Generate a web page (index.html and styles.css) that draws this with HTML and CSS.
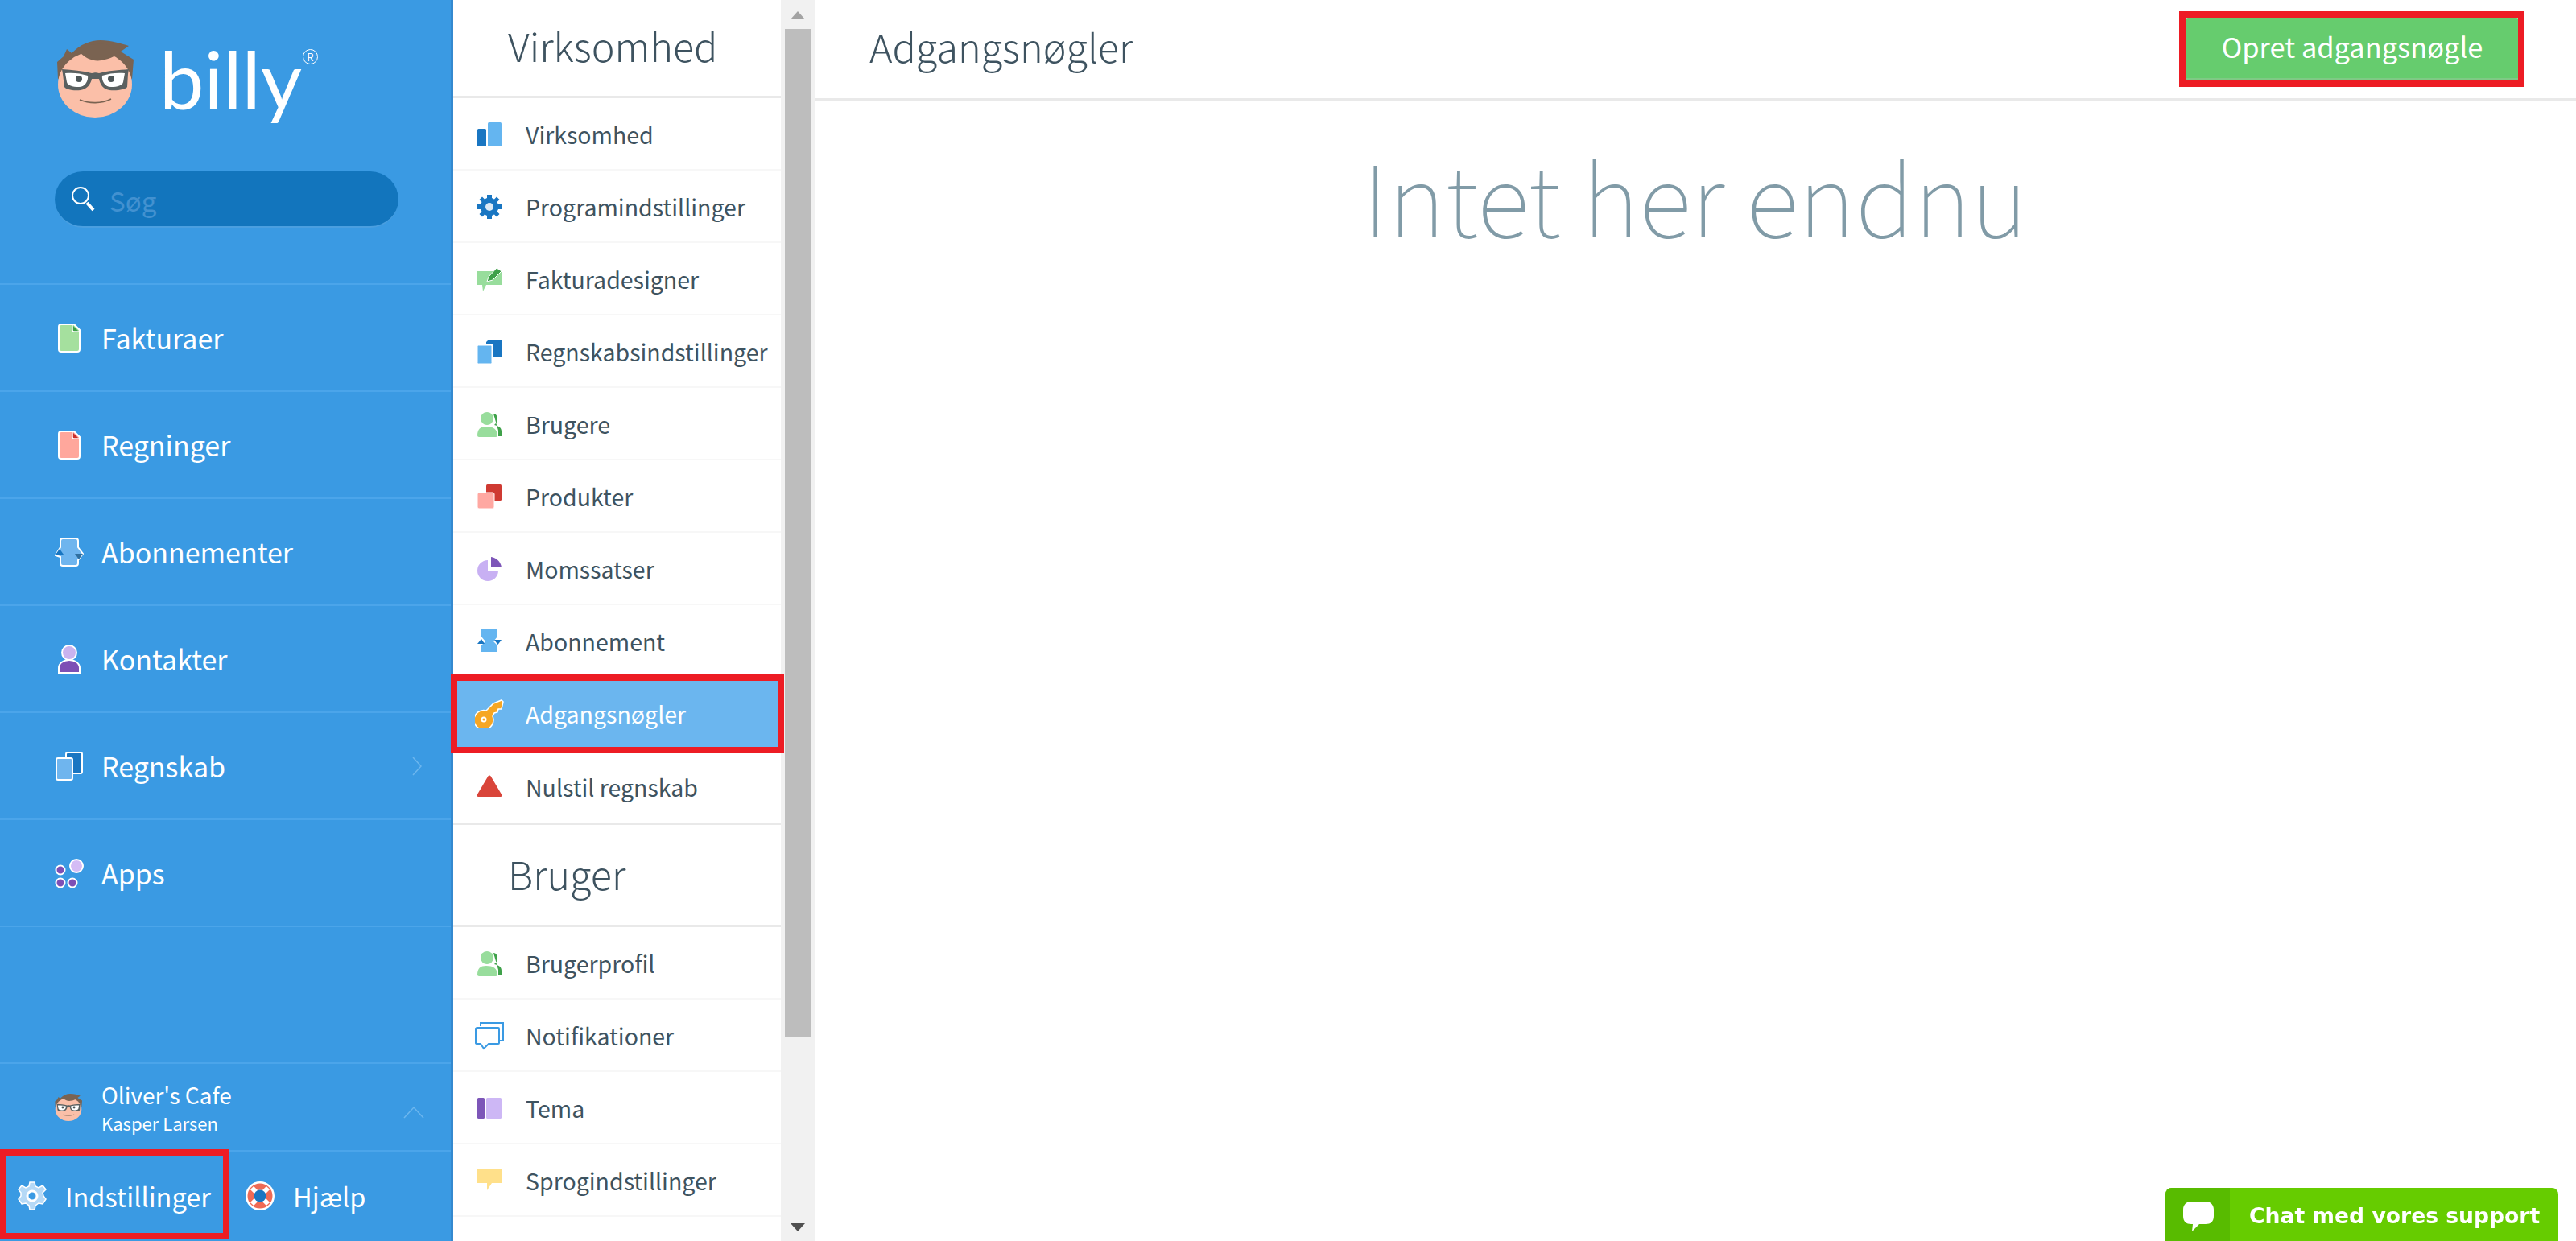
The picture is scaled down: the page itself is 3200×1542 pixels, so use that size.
FILE: index.html
```html
<!DOCTYPE html>
<html lang="da">
<head>
  <meta charset="UTF-8">
  <title>Adgangsnøgler</title>
  <link rel="stylesheet" href="styles.css">
</head>
<body>
  <svg class="sprites" width="0" height="0">
    <symbol id="billy-face" viewBox="0 0 96 100">
      <path d="M1 29 9 22 13 13 19 18C30 7 42 2 55 2 68 2 80 6 90 9L80 16 96 26 94 50 2 50Z" fill="#7a6351"/>
      <ellipse cx="48" cy="57" rx="46" ry="41" fill="#fbbfa8"/>
      <path d="M30 18C36 24 46 29 56 27 68 25 76 20 80 16L60 6 40 8Z" fill="#7a6351"/>
      <path d="M7 38C20 39 32 40 44 43 48 42 50 42 53 43 64 40 78 39 90 38L89 44 88 60C86 63 76 65 66 64 58 63 54 56 53 50H44C43 56 38 63 30 64 20 65 12 63 10 60L8 44Z" fill="#5a6060"/>
      <path d="M11 43C20 42 30 43 39 46 40 52 36 60 28 60 20 60 14 58 13 54Z M57 46C66 43 76 42 85 43L83 54C82 58 76 60 68 60 60 60 56 52 57 46Z" fill="#fff"/>
      <circle cx="28" cy="50" r="4" fill="#4d5658"/>
      <circle cx="68" cy="50" r="4" fill="#4d5658"/>
      <path d="M29 76C41 81 56 81 68 75" fill="none" stroke="#7a6351" stroke-width="1.6"/>
    </symbol>
    <symbol id="people" viewBox="0 0 30 32">
      <path d="M20 3C24 3 25 7 25 10 25 13 23 15 21 17 26 18 30 20 30 25V31H26V24Z" fill="#3fa14a"/>
      <circle cx="12" cy="9" r="8" fill="#98dd9c"/>
      <path d="M0 30C0 22 4 19 11 19 19 19 25 22 25 30 25 31 24 32 23 32H2C1 32 0 31 0 30Z" fill="#98dd9c"/>
    </symbol>
  </svg>

  <aside class="sidebar">
    <div class="brand">
      <svg class="brand-face"><use href="#billy-face"/></svg>
      <span class="brand-name">billy</span><span class="brand-reg">R</span>
    </div>
    <div class="search">
      <svg class="search-icon" viewBox="0 0 30 32">
        <circle cx="12" cy="12" r="10" fill="none" stroke="#fff" stroke-width="2"/>
        <path d="M20 21 28 30" stroke="#fff" stroke-width="4"/>
      </svg>
      <input class="search-input" type="text" placeholder="Søg">
    </div>
    <nav class="main-nav">
      <a class="main-item">
        <span class="main-icon"><svg width="28" height="36" viewBox="0 0 28 36"><path d="M4 1H20L27 8V32C27 34 26 35 24 35H4C2 35 1 34 1 32V4C1 2 2 1 4 1Z" fill="#a5e09e" stroke="#fff" stroke-width="2"/><path d="M18 2 26 10H18Z" fill="#3fa14a"/><path d="M18 2V8C18 9 19 10 20 10H26" fill="none" stroke="#fff" stroke-width="1.5"/></svg></span>
        Fakturaer
      </a>
      <a class="main-item">
        <span class="main-icon"><svg width="28" height="36" viewBox="0 0 28 36"><path d="M4 1H20L27 8V32C27 34 26 35 24 35H4C2 35 1 34 1 32V4C1 2 2 1 4 1Z" fill="#ffa79c" stroke="#fff" stroke-width="2"/><path d="M18 2 26 10H18Z" fill="#c9302c"/><path d="M18 2V8C18 9 19 10 20 10H26" fill="none" stroke="#fff" stroke-width="1.5"/></svg></span>
        Regninger
      </a>
      <a class="main-item">
        <span class="main-icon"><svg width="36" height="36" viewBox="0 0 36 36"><path d="M10 1H26C28 1 29 2 29 4V12L35 20 29 28V32C29 34 28 35 26 35H10C8 35 7 34 7 32V24L1 22 7 12V4C7 2 8 1 10 1Z" fill="#6fb5ee" stroke="#fff" stroke-width="2"/><path d="M6 14 11 21H1Z" fill="#1976c2"/><path d="M25 20H35L30 27Z" fill="#2f6f9f"/></svg></span>
        Abonnementer
      </a>
      <a class="main-item">
        <span class="main-icon"><svg width="30" height="38" viewBox="0 0 30 38"><circle cx="15" cy="11" r="9" fill="#c9b3ef" stroke="#fff" stroke-width="2"/><path d="M2 36V30C2 24 8 20 15 20 22 20 28 24 28 30V36Z" fill="#7d4fb5" stroke="#fff" stroke-width="2"/></svg></span>
        Kontakter
      </a>
      <a class="main-item">
        <span class="main-icon"><svg width="34" height="36" viewBox="0 0 34 36"><rect x="13" y="1" width="20" height="26" rx="2" fill="#1976c2" stroke="#fff" stroke-width="2"/><rect x="1" y="8" width="20" height="27" rx="2" fill="#6fb5ee" stroke="#fff" stroke-width="2"/></svg></span>
        Regnskab
        <svg class="main-arrow" width="12" height="24" viewBox="0 0 12 24"><path d="M1 1 11 12 1 23" fill="none" stroke="#6cb6ee" stroke-width="1.5"/></svg>
      </a>
      <a class="main-item">
        <span class="main-icon"><svg width="36" height="38" viewBox="0 0 36 38"><circle cx="27" cy="10" r="8" fill="#d4bcf5" stroke="#fff" stroke-width="2"/><circle cx="7" cy="15" r="5.5" fill="#7d4fb5" stroke="#fff" stroke-width="2"/><circle cx="7" cy="31" r="5.5" fill="#7d4fb5" stroke="#fff" stroke-width="2"/><circle cx="22" cy="31" r="5.5" fill="#7d4fb5" stroke="#fff" stroke-width="2"/></svg></span>
        Apps
      </a>
    </nav>
    <div class="user-box">
      <svg class="user-face"><use href="#billy-face"/></svg>
      <div class="user-text">
        <div class="user-org">Oliver's Cafe</div>
        <div class="user-name">Kasper Larsen</div>
      </div>
      <svg class="user-chevron" width="26" height="16" viewBox="0 0 26 16"><path d="M1 15 13 2 25 15" fill="none" stroke="#6cb6ee" stroke-width="1.5"/></svg>
    </div>
    <div class="bottom-bar">
      <a class="bottom-item marked-side">
        <svg width="36" height="36" viewBox="0 0 36 36">
          <g fill="#b5d9f6" stroke="#fff" stroke-width="1.5">
            <path d="M15 1H21L22 6 26 8 31 5 35 10 31 14 32 18 35 22 31 28 26 27 22 30 21 35H15L14 30 10 27 5 28 1 22 4 18 4 14 1 10 5 5 10 8 14 6Z"/>
          </g>
          <circle cx="18" cy="18" r="6" fill="#3a9ae3" stroke="#fff" stroke-width="3"/>
        </svg>
        Indstillinger
      </a>
      <a class="bottom-item help-item">
        <svg width="36" height="36" viewBox="0 0 36 36">
          <circle cx="18" cy="18" r="18" fill="#fff"/>
          <circle cx="18" cy="18" r="11.5" fill="none" stroke="#ef6a55" stroke-width="8"/>
          <path d="M8 8 13 13M28 8 23 13M8 28 13 23M28 28 23 23" stroke="#fff" stroke-width="6"/>
          <circle cx="18" cy="18" r="7.5" fill="#1976c2"/>
        </svg>
        Hjælp
      </a>
    </div>
  </aside>

  <div class="settings">
    <div class="settings-list">
      <h2 class="settings-head">Virksomhed</h2>
      <a class="settings-item">
        <svg class="settings-icon" viewBox="0 0 30 30"><rect y="8" width="11" height="22" rx="1.5" fill="#1976c2"/><rect x="13" width="17" height="30" rx="1.5" fill="#64b5f0"/></svg>
        Virksomhed
      </a>
      <a class="settings-item">
        <svg class="settings-icon" viewBox="0 0 30 30"><path d="M12 0H18V4L21 5.500 24 2.500 27.500 6 24.500 9 26 12H30V18H26L24.500 21 27.500 24 24 27.500 21 24.500 18 26V30H12V26L9 24.500 6 27.500 2.500 24 5.500 21 4 18H0V12H4L5.500 9 2.500 6 6 2.500 9 5.500 12 4Z" fill="#1976c2"/><circle cx="15" cy="15" r="5" fill="#dbe9f5"/></svg>
        Programindstillinger
      </a>
      <a class="settings-item">
        <svg class="settings-icon" viewBox="0 0 30 30"><path d="M0 5H30V22H11L7 30 6 22H0Z" fill="#98dd9c"/><path d="M12 18 14 12 24 1 30 5 19 16Z" fill="#3fa14a" stroke="#fff" stroke-width="1"/></svg>
        Fakturadesigner
      </a>
      <a class="settings-item">
        <svg class="settings-icon" viewBox="0 0 30 30"><path d="M11 3 14 0H30V22H19V6H11Z" fill="#1976c2"/><rect y="7" width="18" height="23" rx="1.500" fill="#64b5f0" stroke="#fff" stroke-width="1"/></svg>
        Regnskabsindstillinger
      </a>
      <a class="settings-item">
        <svg class="settings-icon"><use href="#people"/></svg>
        Brugere
      </a>
      <a class="settings-item">
        <svg class="settings-icon" viewBox="0 0 30 30"><rect x="11" width="19" height="20" rx="1.500" fill="#cf3a32"/><rect y="10" width="21" height="20" rx="2" fill="#ffa8a2" stroke="#fff" stroke-width="1"/></svg>
        Produkter
      </a>
      <a class="settings-item">
        <svg class="settings-icon" viewBox="0 0 30 30"><path d="M13 4A13 13 0 1 0 26 17H13Z" fill="#c8b0f3"/><path d="M17 0C24 1 29 6 30 13H17Z" fill="#7d56b8"/></svg>
        Momssatser
      </a>
      <a class="settings-item">
        <svg class="settings-icon" viewBox="0 0 30 30"><path d="M5 0H25V9L20 15 25 20V28H5V20L10 15 5 9Z" fill="#64b5f0"/><path d="M5 12 9 18H0Z" fill="#1976c2"/><path d="M21 13H30L25.500 19Z" fill="#1976c2"/></svg>
        Abonnement
      </a>
      <a class="settings-item settings-item-active">
        <svg class="settings-icon settings-icon-key" viewBox="0 0 36 36"><path d="M23 5 33 1 35 3 33 12 29 12 28 16 24 17 22 21A12 12 0 1 1 14 14Z" fill="#f6a623" stroke="#fff" stroke-width="1.500"/><circle cx="11" cy="25" r="3.500" fill="#fff"/><circle cx="11" cy="25" r="1.500" fill="#f6a623"/></svg>
        Adgangsnøgler
      </a>
      <a class="settings-item settings-item-last">
        <svg class="settings-icon" viewBox="0 0 30 30"><path d="M13 2C14 0 16 0 17 2L30 24C31 26 30 27 28 27H2C0 27-1 26 0 24Z" fill="#d9453a"/></svg>
        Nulstil regnskab
      </a>
      <h2 class="settings-head settings-head-second">Bruger</h2>
      <a class="settings-item">
        <svg class="settings-icon"><use href="#people"/></svg>
        Brugerprofil
      </a>
      <a class="settings-item">
        <svg class="settings-icon settings-icon-notif" viewBox="0 0 36 36"><path d="M7 6V2H35V24H30" fill="none" stroke="#3a9ae3" stroke-width="2"/><path d="M3 8H29C30 8 30 9 30 9V27C30 28 30 28 29 28H17L11 34 7 28H3C2 28 1 28 1 27V9C1 9 2 8 3 8Z" fill="#fff" stroke="#3a9ae3" stroke-width="2"/></svg>
        Notifikationer
      </a>
      <a class="settings-item">
        <svg class="settings-icon" viewBox="0 0 30 30"><rect y="2" width="9" height="26" rx="1.500" fill="#7d56b8"/><rect x="11" y="2" width="19" height="26" rx="1.500" fill="#cdb7f5"/></svg>
        Tema
      </a>
      <a class="settings-item">
        <svg class="settings-icon" viewBox="0 0 30 30"><path d="M0 1H30V18H18L12 27V18H0Z" fill="#ffe08a"/></svg>
        Sprogindstillinger
      </a>
      <a class="settings-item">
        <svg class="settings-icon" viewBox="0 0 30 30"><circle cx="15" cy="10" r="8" fill="#4d5f6b"/></svg>
      </a>
    </div>
    <div class="scrollbar">
      <span class="scroll-arrow scroll-arrow-up"></span>
      <div class="scroll-track"><div class="scroll-thumb"></div></div>
      <span class="scroll-arrow scroll-arrow-down"></span>
    </div>
  </div>

  <main class="content">
    <header class="content-bar">
      <h1 class="content-title">Adgangsnøgler</h1>
      <button class="create-btn" type="button">Opret adgangsnøgle</button>
    </header>
    <p class="empty-text">Intet her endnu</p>
  </main>

  <div class="chat-tab">
    <span class="chat-icon">
      <svg width="38" height="40" viewBox="0 0 38 40"><path d="M10 0H28C34 0 38 4 38 10V18C38 25 34 28 28 28H20L11 37 12 28H10C4 28 0 25 0 18V10C0 4 4 0 10 0Z" fill="#fff"/></svg>
    </span>
    <span class="chat-label">Chat med vores support</span>
  </div>
</body>
</html>
```

FILE: styles.css
```css
* {
    box-sizing: border-box;
}
body {
    margin: 0;
    height: 100vh;
    display: flex;
    overflow: hidden;
    background-color: #fff;
    font-family: "Noto Sans CJK SC", "Open Sans", sans-serif;
    color: #3e5360;
}
.sprites {
    position: absolute;
}

/* left blue column */
.sidebar {
    width: 563px;
    flex-shrink: 0;
    display: flex;
    flex-direction: column;
    background-color: #3a9ae3;
    border-right: 3px solid #3489cf;
    color: #fff;
}
.brand {
    height: 213px;
    padding: 48px 0 0 70px;
    display: flex;
    align-items: flex-start;
}
.brand-face {
    width: 96px;
    height: 100px;
}
.brand-name {
    margin: -6px 0 0 32px;
    font-family: "Lato", sans-serif;
    font-size: 99px;
    line-height: 112px;
    font-weight: 400;
}
.brand-reg {
    width: 19px;
    height: 19px;
    margin: 13px 0 0 1px;
    border: 1px solid #fff;
    border-radius: 50%;
    font-size: 13px;
    line-height: 17px;
    text-align: center;
}
.search {
    height: 70px;
    margin: 0 65px 0 68px;
    padding-left: 20px;
    display: flex;
    align-items: center;
    gap: 18px;
    background-color: #1275bd;
    border-bottom: 2px solid #4a9fe0;
    border-radius: 35px;
}
.search-icon {
    width: 30px;
    height: 32px;
    flex-shrink: 0;
}
.search-input {
    flex: 1;
    min-width: 0;
    padding: 3px 0 0;
    border: none;
    background: none;
    outline: none;
    font-family: inherit;
    font-size: 33px;
    line-height: 44px;
    color: #fff;
}
.search-input::placeholder {
    color: #4291d0;
    opacity: 1;
}
.main-nav {
    margin-top: 69px;
    border-top: 2px solid #4ba5ea;
}
.main-item {
    height: 133px;
    padding-left: 68px;
    display: flex;
    align-items: center;
    border-bottom: 2px solid #4ba5ea;
    font-size: 34px;
    line-height: 44px;
}
.main-icon {
    width: 36px;
    margin-right: 22px;
    display: flex;
    justify-content: center;
    flex-shrink: 0;
}
.main-arrow {
    margin-left: auto;
    margin-right: 36px;
}
.user-box {
    margin-top: auto;
    height: 111px;
    padding-left: 68px;
    display: flex;
    align-items: center;
    border-top: 2px solid #4ba5ea;
    border-bottom: 2px solid #4ba5ea;
}
.user-face {
    width: 34px;
    height: 36px;
    flex-shrink: 0;
    margin-right: 24px;
}
.user-org {
    font-size: 28px;
    line-height: 38px;
}
.user-name {
    font-size: 22px;
    line-height: 32px;
}
.user-chevron {
    margin-left: auto;
    margin-right: 33px;
    margin-top: 12px;
}
.bottom-bar {
    height: 111px;
    display: flex;
    align-items: center;
}
.bottom-item {
    height: 100%;
    padding-bottom: 2px;
    display: flex;
    align-items: center;
    gap: 23px;
    font-size: 32.500px;
    line-height: 44px;
}
.marked-side {
    position: relative;
    width: 285px;
    padding-left: 22px;
}
.marked-side::after {
    content: "";
    position: absolute;
    left: 0;
    right: 0;
    top: -3px;
    bottom: 2px;
    border: 8px solid #ed1c24;
}
.help-item {
    margin-left: 20px;
}

/* settings menu */
.settings {
    width: 449px;
    flex-shrink: 0;
    display: flex;
    background-color: #fff;
}
.settings-list {
    width: 407px;
    flex-shrink: 0;
    height: 100vh;
}
.settings-head {
    height: 122px;
    margin: 0;
    padding: 26px 0 0 68px;
    border-bottom: 3px solid #e9e9e9;
    font-size: 48.500px;
    line-height: 60px;
    font-weight: 200;
}
.settings-head-second {
    height: 130px;
    padding-top: 30px;
    border-top: 3px solid #e9e9e9;
}
.settings-item {
    height: 90px;
    padding: 2px 0 0 30px;
    display: flex;
    align-items: center;
    gap: 30px;
    border-bottom: 2px solid #f7f7f7;
    font-size: 28.500px;
    line-height: 40px;
    white-space: nowrap;
}
.settings-item-last {
    border-bottom: none;
}
.settings-item-active {
    position: relative;
    background-color: #6bb6ef;
    color: #fff;
}
.settings-item-active::after {
    content: "";
    position: absolute;
    left: -3px;
    right: -4px;
    top: -4px;
    bottom: -6px;
    border: 8px solid #ed1c24;
}
.settings-icon {
    width: 30px;
    height: 32px;
    flex-shrink: 0;
}
.settings-icon-key,
.settings-icon-notif {
    width: 36px;
    height: 36px;
    margin: 0 -3px;
}
.scrollbar {
    width: 42px;
    height: 100vh;
    display: flex;
    flex-direction: column;
    align-items: center;
    background-color: #f1f1f1;
}
.scroll-arrow {
    width: 0;
    height: 0;
    margin: 14px 0 12px;
    border-left: 9px solid transparent;
    border-right: 9px solid transparent;
}
.scroll-arrow-up {
    border-bottom: 10px solid #a3a3a3;
}
.scroll-arrow-down {
    border-top: 10px solid #505050;
}
.scroll-track {
    flex: 1;
    width: 33px;
}
.scroll-thumb {
    height: 1252px;
    background-color: #bdbdbd;
}

/* main area */
.content {
    flex: 1;
    min-width: 0;
    display: flex;
    flex-direction: column;
}
.content-bar {
    height: 125px;
    padding: 0 71px 0 68px;
    display: flex;
    align-items: center;
    justify-content: space-between;
    border-bottom: 3px solid #e9e9e9;
}
.content-title {
    margin: 0 0 9px;
    font-size: 48.500px;
    line-height: 60px;
    font-weight: 200;
}
.create-btn {
    position: relative;
    width: 414px;
    height: 78px;
    padding-bottom: 6px;
    border: none;
    border-bottom: 3px solid #7fca85;
    border-radius: 3px;
    background-color: #66cc6e;
    color: #fff;
    font-family: inherit;
    font-size: 34.400px;
    line-height: 44px;
}
.create-btn::after {
    content: "";
    position: absolute;
    left: -8px;
    right: -7px;
    top: -8px;
    bottom: -11px;
    border: 8px solid #ed1c24;
}
.empty-text {
    margin: 42px 0 0;
    text-align: center;
    font-size: 122.400px;
    line-height: 150px;
    font-weight: 100;
    color: #819ba7;
}
.chat-tab {
    position: fixed;
    right: 22px;
    bottom: 0;
    height: 66px;
    width: 488px;
    display: flex;
    background-color: #66cc00;
    border-radius: 8px 8px 0 0;
    overflow: hidden;
    color: #fff;
}
.chat-icon {
    width: 80px;
    padding: 17px 0 0 22px;
    background-color: #58bb00;
}
.chat-label {
    padding-left: 24px;
    font-family: "DejaVu Sans", sans-serif;
    font-size: 26.600px;
    font-weight: 700;
    line-height: 70px;
    white-space: nowrap;
}
```
